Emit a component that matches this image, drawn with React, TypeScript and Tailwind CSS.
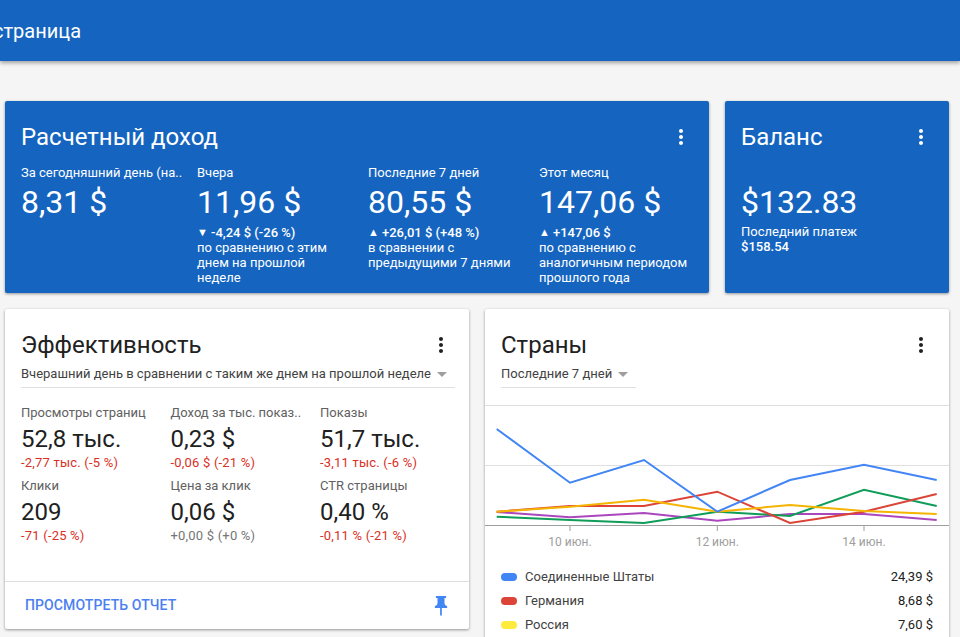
const MoreVert = ({ className }: { className: string }) => (
  <svg viewBox="0 0 24 24" className={className} fill="currentColor">
    <path d="M12 8c1.1 0 2-.9 2-2s-.9-2-2-2-2 .9-2 2 .9 2 2 2zm0 2c-1.1 0-2 .9-2 2s.9 2 2 2 2-.9 2-2-.9-2-2-2zm0 6c-1.1 0-2 .9-2 2s.9 2 2 2 2-.9 2-2-.9-2-2-2z" />
  </svg>
)

const Caret = () => <span className="h-0 w-0 border-x-[5px] border-t-[5px] border-x-transparent border-t-[#9e9e9e]" />

const income = [
  { label: "За сегодняшний день (на..", value: "8,31 $", width: "w-[176px]" },
  {
    label: "Вчера",
    value: "11,96 $",
    width: "w-[171px]",
    arrow: "▼",
    delta: "-4,24 $ (-26 %)",
    note: ["по сравнению с этим", "днем на прошлой", "неделе"],
  },
  {
    label: "Последние 7 дней",
    value: "80,55 $",
    width: "w-[171px]",
    arrow: "▲",
    delta: "+26,01 $ (+48 %)",
    note: ["в сравнении с", "предыдущими 7 днями"],
  },
  {
    label: "Этот месяц",
    value: "147,06 $",
    width: "w-[154px]",
    arrow: "▲",
    delta: "+147,06 $",
    note: ["по сравнению с", "аналогичным периодом", "прошлого года"],
  },
]

const metrics = [
  { label: "Просмотры страниц", value: "52,8 тыс.", delta: "-2,77 тыс. (-5 %)" },
  { label: "Доход за тыс. показ..", value: "0,23 $", delta: "-0,06 $ (-21 %)" },
  { label: "Показы", value: "51,7 тыс.", delta: "-3,11 тыс. (-6 %)" },
  { label: "Клики", value: "209", delta: "-71 (-25 %)" },
  { label: "Цена за клик", value: "0,06 $", delta: "+0,00 $ (+0 %)", flat: true },
  { label: "CTR страницы", value: "0,40 %", delta: "-0,11 % (-21 %)" },
]

const xs = [11.7, 85, 159, 232.3, 305, 379, 451.7]
const series = [
  { color: "#ab47bc", ys: [106, 111.3, 107, 114.7, 108, 108, 114] },
  { color: "#0f9d58", ys: [110.7, 114, 117, 105.7, 110, 83.7, 100] },
  { color: "#db4437", ys: [105.7, 100, 100, 85.7, 117, 105.7, 88] },
  { color: "#f4b400", ys: [105.7, 100.7, 93.7, 105.7, 99, 105, 108] },
  { color: "#4285f4", ys: [23, 76.7, 54, 105.7, 74, 58.7, 74] },
]

const countries = [
  { name: "Соединенные Штаты", amount: "24,39 $", color: "bg-[#4285f4]" },
  { name: "Германия", amount: "8,68 $", color: "bg-[#db4437]" },
  { name: "Россия", amount: "7,60 $", color: "bg-[#ffeb3b]" },
]

export default function App() {
  return (
    <div className="h-[637px] w-[960px] overflow-hidden bg-[#f5f5f5] font-['Roboto',sans-serif]">
      {/* Header */}
      <div className="flex h-[61px] items-center overflow-hidden bg-[#1565c0] shadow-[0_2px_4px_rgba(0,0,0,0.35)]">
        <span className="-ml-[7px] text-[20px] text-white">страница</span>
      </div>

      <div className="flex flex-col gap-4 pl-[5px] pt-10">
        {/* Top row */}
        <div className="flex gap-4">
          <div className="h-[192px] w-[704px] rounded-[2px] bg-[#1565c0] px-4 pt-5 text-white shadow-[0_1px_3px_rgba(0,0,0,0.4)]">
            <div className="flex items-center justify-between">
              <h2 className="text-[24px] leading-8">Расчетный доход</h2>
              <MoreVert className="h-6 w-6" />
            </div>
            <div className="mt-[12px] flex">
              {income.map((col) => (
                <div key={col.label} className={`shrink-0 ${col.width}`}>
                  <div className="whitespace-nowrap text-[13px] leading-4">{col.label}</div>
                  <div className="mt-[1px] text-[32px] leading-[40px]">{col.value}</div>
                  {col.delta && (
                    <div className="mt-[3px] flex items-center whitespace-nowrap text-[13px] font-medium leading-[15px]">
                      <span className="w-[14px] text-[11px]">{col.arrow}</span>
                      {col.delta}
                    </div>
                  )}
                  {col.note?.map((line) => (
                    <div key={line} className="whitespace-nowrap text-[13px] leading-[15px]">{line}</div>
                  ))}
                </div>
              ))}
            </div>
          </div>

          <div className="h-[192px] w-[224px] rounded-[2px] bg-[#1565c0] px-4 pt-5 text-white shadow-[0_1px_3px_rgba(0,0,0,0.4)]">
            <div className="flex items-center justify-between">
              <h2 className="text-[24px] leading-8">Баланс</h2>
              <MoreVert className="h-6 w-6" />
            </div>
            <div className="mt-[29px] text-[32px] leading-[40px]">$132.83</div>
            <div className="mt-[2px] text-[13px] leading-[15px]">Последний платеж</div>
            <div className="text-[13px] font-medium leading-[15px]">$158.54</div>
          </div>
        </div>

        {/* Bottom row */}
        <div className="flex gap-4">
          <div className="flex h-[320px] w-[464px] flex-col rounded-[2px] bg-white shadow-[0_1px_3px_rgba(0,0,0,0.4)]">
            <div className="flex-1 px-4 pt-5">
              <div className="flex items-center justify-between">
                <h2 className="text-[24px] leading-8 text-[#212121]">Эффективность</h2>
                <MoreVert className="h-6 w-6 text-[#212121]" />
              </div>
              <div className="flex h-[27px] w-[434px] items-center justify-between border-b border-[#e0e0e0] pr-2 text-[13px] text-[#424242]">
                <span>Вчерашний день в сравнении с таким же днем на прошлой неделе</span>
                <Caret />
              </div>
              <div className="mt-[17px] grid grid-cols-[repeat(3,149.5px)]">
                {metrics.map((m) => (
                  <div key={m.label} className="h-[73px]">
                    <div className="whitespace-nowrap text-[13px] leading-4 text-[#616161]">{m.label}</div>
                    <div className="mt-[1px] text-[24px] leading-[34px] text-[#212121]">{m.value}</div>
                    <div className={m.flat ? "text-[13px] leading-[14px] tracking-[0.2px] text-[#757575]" : "text-[13px] leading-[14px] tracking-[0.2px] text-[#d93025]"}>{m.delta}</div>
                  </div>
                ))}
              </div>
            </div>
            <div className="flex h-[48px] items-center justify-between border-t border-[#e0e0e0] pl-5 pr-4">
              <span className="text-[14px] font-medium tracking-[0.1px] text-[#4c7ff0]">ПРОСМОТРЕТЬ ОТЧЕТ</span>
              <svg viewBox="0 0 24 24" preserveAspectRatio="none" className="mt-[1px] h-6 w-[21px] translate-x-[-1.5px] text-[#4285f4]" fill="currentColor">
                <path d="M16 9V4h1c.55 0 1-.45 1-1s-.45-1-1-1H7c-.55 0-1 .45-1 1s.45 1 1 1h1v5c0 1.66-1.34 3-3 3v2h5.97v7l1 1 1-1v-7H19v-2c-1.66 0-3-1.34-3-3z" />
              </svg>
            </div>
          </div>

          <div className="h-[340px] w-[464px] rounded-[2px] bg-white shadow-[0_1px_3px_rgba(0,0,0,0.4)]">
            <div className="px-4 pt-5">
              <div className="flex items-center justify-between">
                <h2 className="text-[24px] leading-8 text-[#212121]">Страны</h2>
                <MoreVert className="h-6 w-6 text-[#212121]" />
              </div>
              <div className="flex h-[27px] w-[135px] items-center justify-between border-b border-[#e0e0e0] pr-2 text-[13px] text-[#424242]">
                <span>Последние 7 дней</span>
                <Caret />
              </div>
            </div>
            <div className="mt-[17px] border-t border-[#e0e0e0]">
              <svg width="464" height="146" className="block">
                <line x1="0" x2="464" y1="59.5" y2="59.5" stroke="#e0e0e0" />
                <line x1="0" x2="464" y1="119.5" y2="119.5" stroke="#9e9e9e" />
                {[85, 232.3, 379].map((x) => (
                  <line key={x} x1={x} x2={x} y1="119.5" y2="125" stroke="#9e9e9e" />
                ))}
                {series.map((s) => (
                  <polyline
                    key={s.color}
                    fill="none"
                    stroke={s.color}
                    strokeWidth="2"
                    points={s.ys.map((y, i) => `${xs[i]},${y}`).join(" ")}
                  />
                ))}
                {[
                  [85, "10 июн."],
                  [232.3, "12 июн."],
                  [379, "14 июн."],
                ].map(([x, t]) => (
                  <text key={t} x={x} y="140" textAnchor="middle" fontSize="12" fill="#9e9e9e">{t}</text>
                ))}
              </svg>
            </div>
            <div className="mt-[13px] flex flex-col px-4">
              {countries.map((c) => (
                <div key={c.name} className="flex h-6 items-center text-[13px] text-[#424242]">
                  <span className={`mr-2 h-2 w-4 rounded-full ${c.color}`} />
                  <span className="flex-1">{c.name}</span>
                  <span className="text-[#212121]">{c.amount}</span>
                </div>
              ))}
            </div>
          </div>
        </div>
      </div>
    </div>
  )
}
